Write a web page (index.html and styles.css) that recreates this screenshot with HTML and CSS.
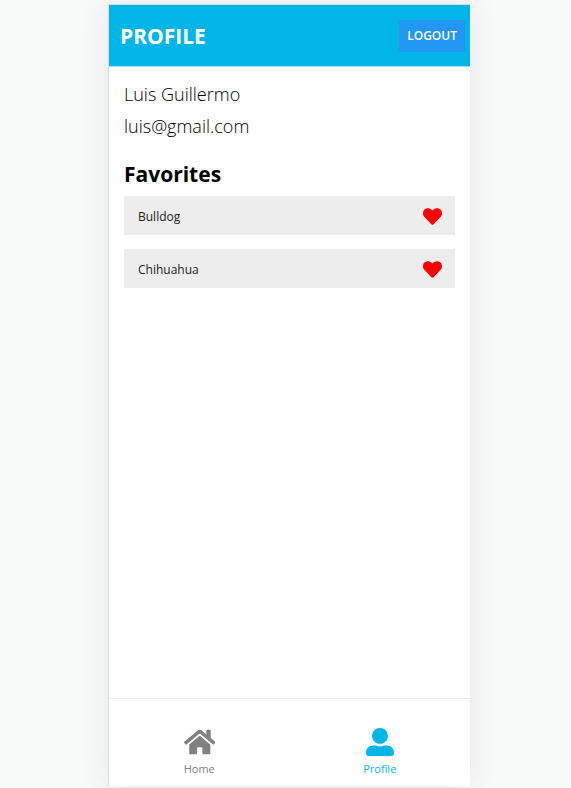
FILE: index.html
```html
<!DOCTYPE html>
<html lang="en">
<head>
<meta charset="utf-8">
<meta name="viewport" content="width=device-width, initial-scale=1">
<title>Profile</title>
<link rel="stylesheet" href="styles.css">
</head>
<body>
<div class="phone">
  <header class="header">
    <h1 class="title">PROFILE</h1>
    <button class="logout" type="button">LOGOUT</button>
  </header>
  <main class="content">
    <p class="user-line">Luis Guillermo</p>
    <p class="user-line">luis@gmail.com</p>
    <h2 class="section-title">Favorites</h2>
    <ul class="favorites">
      <li class="favorite">
        <span>Bulldog</span>
        <button class="heart" type="button" aria-label="Remove Bulldog">
          <svg viewBox="0 0 512 512" aria-hidden="true"><path d="M462.3 62.6C407.5 15.9 326 24.3 275.7 76.2L256 96.5l-19.7-20.3C186.1 24.3 104.5 15.9 49.7 62.6c-62.8 53.6-66.1 149.8-9.9 207.9l193.5 199.8c12.5 12.9 32.8 12.9 45.3 0l193.5-199.8c56.3-58.1 53-154.3-9.8-207.9z"/></svg>
        </button>
      </li>
      <li class="favorite">
        <span>Chihuahua</span>
        <button class="heart" type="button" aria-label="Remove Chihuahua">
          <svg viewBox="0 0 512 512" aria-hidden="true"><path d="M462.3 62.6C407.5 15.9 326 24.3 275.7 76.2L256 96.5l-19.7-20.3C186.1 24.3 104.5 15.9 49.7 62.6c-62.8 53.6-66.1 149.8-9.9 207.9l193.5 199.8c12.5 12.9 32.8 12.9 45.3 0l193.5-199.8c56.3-58.1 53-154.3-9.8-207.9z"/></svg>
        </button>
      </li>
    </ul>
  </main>
  <nav class="tabs">
    <a class="tab" href="#home">
      <svg viewBox="0 0 576 512" aria-hidden="true"><path d="M280.37 148.26L96 300.11V464a16 16 0 0 0 16 16l112.06-.29a16 16 0 0 0 15.92-16V368a16 16 0 0 1 16-16h64a16 16 0 0 1 16 16v95.64a16 16 0 0 0 16 16.05L464 480a16 16 0 0 0 16-16V300L295.67 148.26a12.19 12.19 0 0 0-15.3 0zM571.6 251.47L488 182.56V44.05a12 12 0 0 0-12-12h-56a12 12 0 0 0-12 12v72.61L318.47 43a48 48 0 0 0-61 0L4.34 251.47a12 12 0 0 0-1.6 16.9l25.5 31A12 12 0 0 0 45.15 301l235.22-193.74a12.19 12.19 0 0 1 15.3 0L530.9 301a12 12 0 0 0 16.9-1.6l25.5-31a12 12 0 0 0-1.7-16.93z"/></svg>
      <span>Home</span>
    </a>
    <a class="tab tab-active" href="#profile" aria-current="page">
      <svg viewBox="0 0 512 512" aria-hidden="true"><path d="M256 288c79.5 0 144-64.5 144-144S335.5 0 256 0 112 64.5 112 144s64.5 144 144 144zm128 32h-55.1c-22.2 10.2-46.9 16-72.9 16s-50.6-5.8-72.9-16H128C57.3 320 0 377.3 0 448v16c0 26.5 21.5 48 48 48h416c26.5 0 48-21.5 48-48v-16c0-70.7-57.3-128-128-128z"/></svg>
      <span>Profile</span>
    </a>
  </nav>
</div>
</body>
</html>
```
FILE: styles.css
```css
* {
  box-sizing: border-box;
}

body {
  margin: 0;
  min-height: 100vh;
  padding: 4px 101px 1px 108px;
  display: flex;
  background: #f8faf9;
  color: #000;
  font-family: "Segoe UI", "Open Sans", "Noto Sans", sans-serif;
}

.phone {
  flex: 1;
  display: flex;
  flex-direction: column;
  background: #fff;
  border: 1px solid #ddd;
  border-width: 1px 0 0 1px;
  box-shadow: 0 0 30px rgba(0, 0, 0, 0.08);
}

.header {
  display: flex;
  align-items: center;
  justify-content: space-between;
  height: 62px;
  padding: 0 5px 0 11px;
  background: #02b5e8;
  border-bottom: 1px solid #9adff5;
}

.title {
  margin: 0;
  color: #fff;
  font-size: 21px;
  line-height: 32px;
}

.logout {
  height: 32px;
  padding: 0 8px;
  border: 0;
  border-radius: 2px;
  background: #2196f3;
  color: #fff;
  font: 600 12px "Segoe UI", "Open Sans", "Noto Sans", sans-serif;
}

.content {
  flex: 1;
  padding: 11px 15px;
}

.user-line {
  margin: 0;
  font-size: 18px;
  font-weight: 300;
  line-height: 32px;
}

.section-title {
  margin: 16px 0 6px;
  font-size: 21px;
  line-height: 32px;
}

.favorites {
  display: grid;
  gap: 14px;
  margin: 0;
  padding: 0;
  list-style: none;
}

.favorite {
  display: flex;
  align-items: center;
  justify-content: space-between;
  height: 39px;
  padding: 1px 13px 0 14px;
  background: #ededed;
  color: #222;
  font-size: 12px;
}

.heart {
  padding: 0;
  border: 0;
  background: none;
}

.heart svg {
  display: block;
  width: 19px;
  height: 19px;
  fill: #f00;
}

.tabs {
  display: flex;
  height: 89px;
  padding-top: 29px;
  border-top: 1px solid #eee;
  border-bottom: 1px solid #eee;
}

.tab {
  flex: 1;
  display: flex;
  flex-direction: column;
  align-items: center;
  gap: 5px;
  color: #808080;
  font-size: 11px;
  line-height: 16px;
  text-decoration: none;
}

.tab svg {
  height: 28px;
  fill: currentColor;
}

.tab-active {
  color: #02b5e8;
}
```
